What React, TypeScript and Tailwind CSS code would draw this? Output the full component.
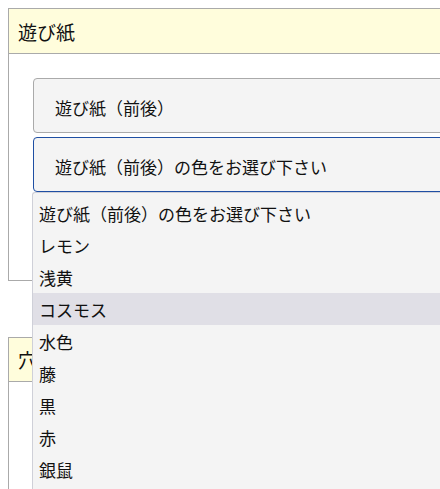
import React from "react";

const font = { fontFamily: '"Noto Sans CJK JP", "Noto Sans", sans-serif' };

const options = [
  "遊び紙（前後）の色をお選び下さい",
  "レモン",
  "浅黄",
  "コスモス",
  "水色",
  "藤",
  "黒",
  "赤",
  "銀鼠",
];

export default function App() {
  return (
    <div
      className="relative w-[440px] h-[489px] overflow-hidden bg-white text-[#111]"
      style={font}
    >
      <div className="pt-[8px] pl-[8px] w-[560px] flex flex-col">
        {/* Panel 1 */}
        <div className="border border-[#aaaaaa]">
          <div className="h-[45px] bg-[#fffddc] border-b border-[#aaaaaa] flex items-center pl-[9px] text-[19px] leading-none">
            遊び紙
          </div>
          <div className="pt-[24px] pl-[24px] pb-[88px] flex flex-col gap-[4px]">
            <div className="h-[55px] rounded-[4px] border border-[#aaaaaa] bg-[#f4f4f4] flex items-center pl-[21px] pt-[4px] text-[17px] leading-none">
              遊び紙（前後）
            </div>
            <div className="h-[55px] rounded-[4px] border border-[#1f4fa3] bg-[#f4f4f4] flex items-center pl-[21px] pt-[4px] text-[17px] leading-none">
              遊び紙（前後）の色をお選び下さい
            </div>
          </div>
        </div>

        {/* Panel 2 */}
        <div className="mt-[56px] border border-[#aaaaaa]">
          <div className="h-[44px] bg-[#fffddc] border-b border-[#aaaaaa] flex items-center pl-[9px] text-[19px] leading-none">
            穴あけ
          </div>
          <div className="h-[200px]" />
        </div>
      </div>

      {/* Dropdown list */}
      <div className="absolute left-[32px] top-[192px] w-[500px] h-[320px] bg-[#f4f4f4] border-l border-t border-[#cfd0d8] rounded-tl-[3px] pt-[4px]">
        {options.map((o, i) => (
          <div
            key={o}
            className={
              "h-[32px] flex items-center pl-[6px] text-[17px] leading-none " +
              (i === 3 ? "bg-[#e0dfe6]" : "")
            }
          >
            {o}
          </div>
        ))}
      </div>
    </div>
  );
}
